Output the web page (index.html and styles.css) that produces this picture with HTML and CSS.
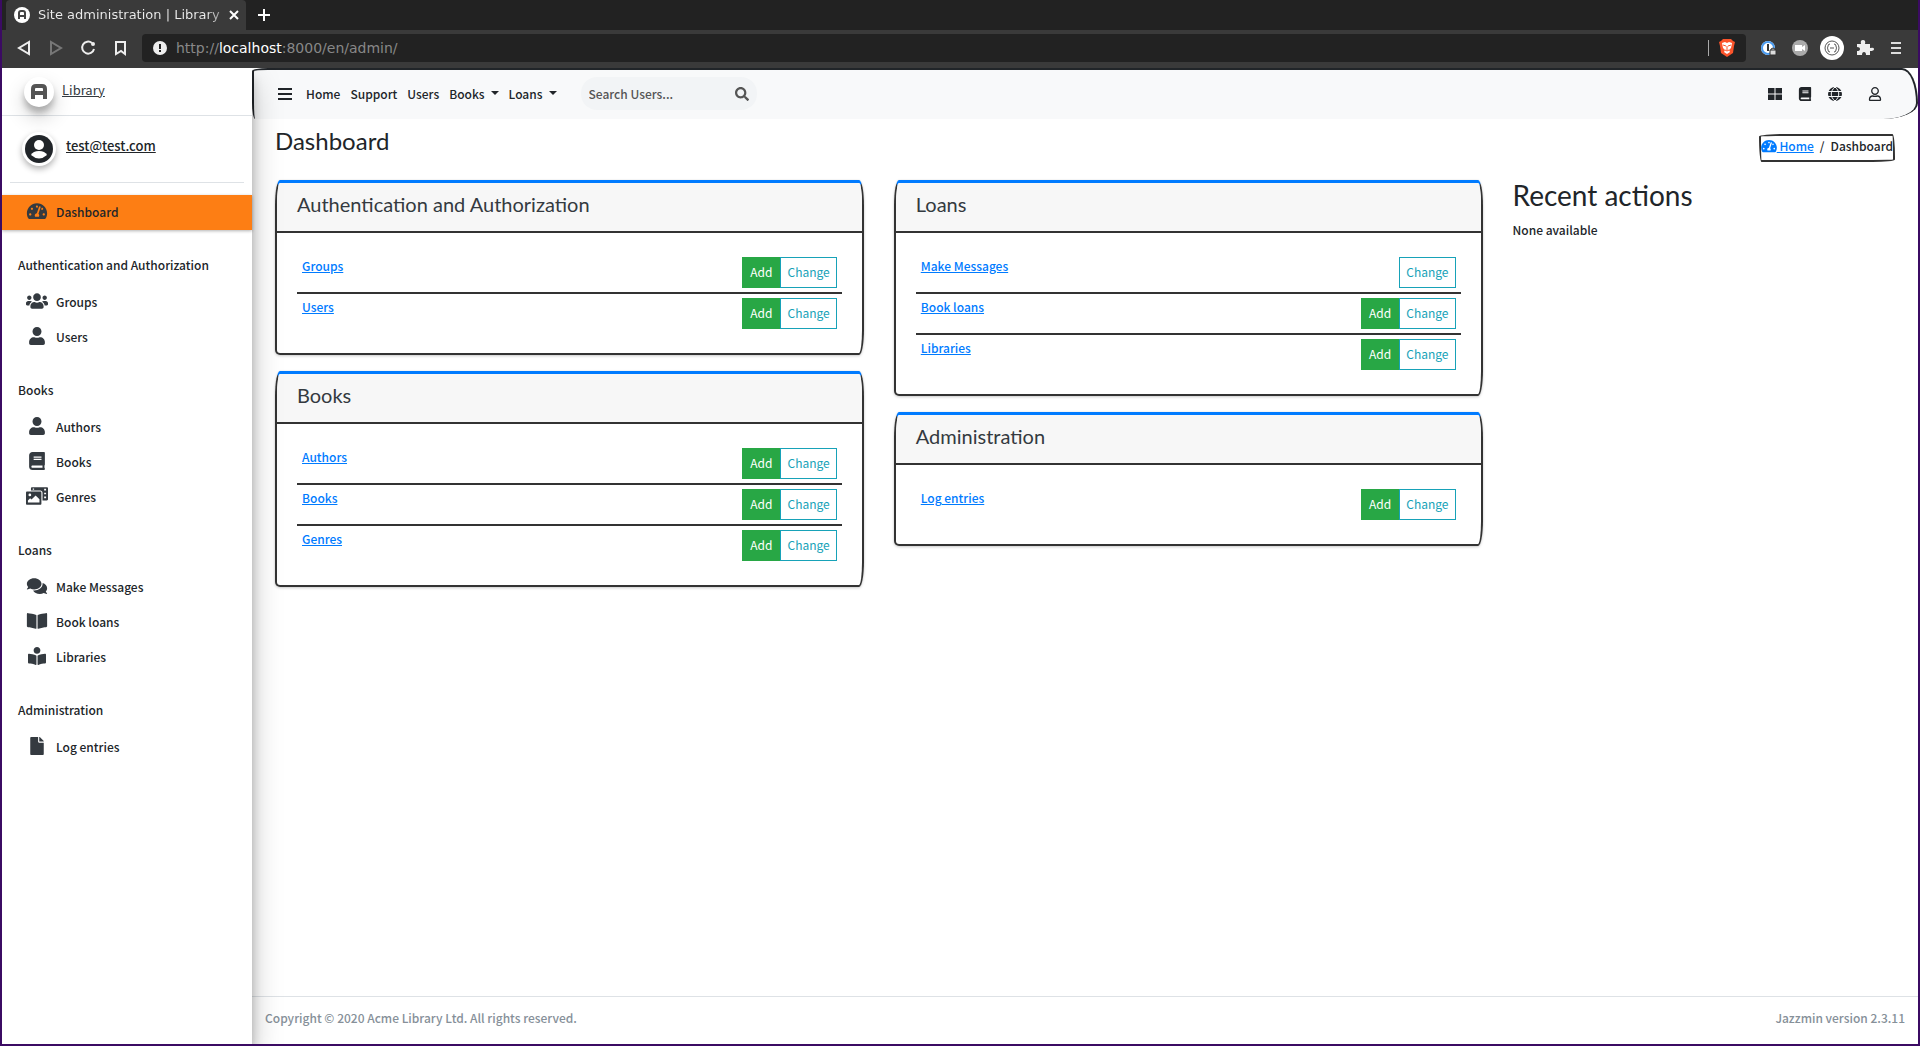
FILE: index.html
```
<!DOCTYPE html>
<html lang="en">
<head>
    <meta charset="UTF-8">
    <meta name="viewport" content="width=device-width, initial-scale=1.0">
    <title>Site administration | Library</title>
    <link rel="stylesheet" href="styles.css">
</head>
<body>

    <!-- Icon sprite -->
    <svg class="sprite" aria-hidden="true">
        <symbol id="user" viewBox="0 0 448 512"><path d="M224 256c70.7 0 128-57.3 128-128S294.7 0 224 0 96 57.3 96 128s57.3 128 128 128zm89.6 32h-16.7c-22.2 10.2-46.9 16-72.9 16s-50.6-5.8-72.9-16h-16.7C60.2 288 0 348.2 0 422.4V464c0 26.5 21.5 48 48 48h352c26.5 0 48-21.5 48-48v-41.6c0-74.2-60.2-134.4-134.4-134.4z"/></symbol>
        <symbol id="users" viewBox="0 0 640 512"><path d="M96 224c35.3 0 64-28.7 64-64s-28.7-64-64-64-64 28.7-64 64 28.7 64 64 64zm448 0c35.3 0 64-28.7 64-64s-28.7-64-64-64-64 28.7-64 64 28.7 64 64 64zm32 32h-64c-17.6 0-33.5 7.1-45.1 18.6 40.3 22.1 68.9 62 75.1 109.4h66c17.7 0 32-14.3 32-32v-32c0-35.3-28.7-64-64-64zm-256 0c61.9 0 112-50.1 112-112S381.9 32 320 32 208 82.1 208 144s50.1 112 112 112zm76.8 32h-8.3c-20.8 10-43.9 16-68.5 16s-47.6-6-68.5-16h-8.3C179.6 288 128 339.6 128 403.2V432c0 26.5 21.5 48 48 48h288c26.5 0 48-21.5 48-48v-28.8c0-63.6-51.6-115.2-115.2-115.2zm-223.7-13.4C161.5 263.1 145.6 256 128 256H64c-35.3 0-64 28.7-64 64v32c0 17.7 14.3 32 32 32h65.9c6.3-47.4 34.9-87.3 75.2-109.4z"/></symbol>
        <symbol id="book" viewBox="0 0 448 512"><path d="M448 360V24c0-13.3-10.7-24-24-24H96C43 0 0 43 0 96v320c0 53 43 96 96 96h328c13.3 0 24-10.7 24-24v-16c0-7.5-3.5-14.3-8.9-18.7-4.2-15.4-4.2-59.3 0-74.7 5.4-4.3 8.9-11.1 8.9-18.6zM128 134c0-3.3 2.7-6 6-6h212c3.3 0 6 2.7 6 6v20c0 3.3-2.7 6-6 6H134c-3.3 0-6-2.7-6-6v-20zm0 64c0-3.3 2.7-6 6-6h212c3.3 0 6 2.7 6 6v20c0 3.3-2.7 6-6 6H134c-3.3 0-6-2.7-6-6v-20zm253.4 250H96c-17.7 0-32-14.3-32-32 0-17.6 14.4-32 32-32h285.4c-1.9 17.1-1.9 46.9 0 64z"/></symbol>
        <symbol id="tachometer" viewBox="0 0 576 512"><path d="M288 32C128.94 32 0 160.94 0 320c0 52.8 14.25 102.26 39.06 144.8 5.61 9.62 16.3 15.2 27.44 15.2h443c11.14 0 21.83-5.58 27.44-15.2C561.75 422.26 576 372.8 576 320c0-159.06-128.94-288-288-288zm0 64c14.71 0 26.58 10.13 30.32 23.65-1.11 2.26-2.64 4.23-3.45 6.67l-9.22 27.67c-5.13 3.49-10.97 6.01-17.64 6.01-17.67 0-32-14.33-32-32S270.33 96 288 96zM96 384c-17.67 0-32-14.33-32-32s14.33-32 32-32 32 14.33 32 32-14.33 32-32 32zm48-160c-17.67 0-32-14.33-32-32s14.33-32 32-32 32 14.33 32 32-14.33 32-32 32zm246.77-72.41l-61.33 184C343.13 347.33 352 364.54 352 384c0 11.72-3.38 22.55-8.88 32H232.88c-5.5-9.45-8.88-20.28-8.88-32 0-33.94 26.5-61.43 59.9-63.59l61.34-184.01c4.17-12.56 17.73-19.45 30.36-15.17 12.57 4.19 19.35 17.79 15.17 30.36zm14.66 57.2l15.52-46.55c3.47-1.29 7.13-2.23 11.05-2.23 17.67 0 32 14.33 32 32s-14.33 32-32 32c-11.38-.01-20.89-6.28-26.57-15.22zM480 384c-17.67 0-32-14.33-32-32s14.33-32 32-32 32 14.33 32 32-14.33 32-32 32z"/></symbol>
        <symbol id="media" viewBox="0 0 640 512"><path fill-rule="evenodd" d="M176 0h432c18 0 32 14 32 32v320c0 18-14 32-32 32H480V160c0-35-29-64-64-64H144V32c0-18 14-32 32-32zm20 36v40h40V36zm332 12v48h56V48zm0 112v48h56v-48zm0 112v48h56v-48z"/><path fill-rule="evenodd" d="M32 128h384c18 0 32 14 32 32v320c0 18-14 32-32 32H32c-18 0-32-14-32-32V160c0-18 14-32 32-32zm80 56a40 40 0 1 0 0 80 40 40 0 1 0 0-80zM56 448h336v-96L280 240 160 360l-40-40-64 64z"/></symbol>
        <symbol id="comments" viewBox="0 0 576 512"><path d="M416 192c0-88.4-93.1-160-208-160S0 103.6 0 192c0 34.3 14.1 65.9 38 92-13.4 30.2-35.5 54.2-35.8 54.5-2.2 2.3-2.8 5.7-1.5 8.7S4.8 352 8 352c36.6 0 66.9-12.3 88.7-25 32.2 15.7 70.3 25 111.3 25 114.9 0 208-71.6 208-160zm122 220c23.9-26 38-57.7 38-92 0-66.9-53.5-124.2-129.3-148.1.9 6.6 1.3 13.3 1.3 20.1 0 105.9-107.7 192-240 192-10.8 0-21.3-.8-31.7-1.9C207.8 439.6 281.8 480 368 480c41 0 79.1-9.2 111.3-25 21.8 12.7 52.1 25 88.7 25 3.2 0 6.1-1.9 7.3-4.8 1.3-2.9.7-6.3-1.5-8.7-.3-.3-22.4-24.2-35.8-54.5z"/></symbol>
        <symbol id="book-open" viewBox="0 0 576 512"><path d="M542.22 32.05c-54.8 3.11-163.72 14.43-230.96 55.59-4.64 2.84-7.27 7.89-7.27 13.17v363.87c0 11.55 12.63 18.85 23.28 13.49 69.18-34.82 169.23-44.32 218.7-46.92 16.89-.89 30.02-14.43 30.02-30.66V62.75c.01-17.71-15.35-31.74-33.77-30.7zM264.73 87.64C197.5 46.48 88.58 35.17 33.78 32.05 15.36 31.01 0 45.04 0 62.75V400.6c0 16.24 13.13 29.78 30.02 30.66 49.49 2.6 149.59 12.11 218.77 46.95 10.62 5.35 23.21-1.94 23.21-13.46V100.63c0-5.29-2.62-10.14-7.27-12.99z"/></symbol>
        <symbol id="book-reader" viewBox="0 0 512 512"><path d="M352 96c0-53.02-42.98-96-96-96s-96 42.98-96 96 42.98 96 96 96 96-42.98 96-96zM233.59 241.1c-59.33-36.32-155.43-46.3-203.79-49.05C13.55 191.13 0 203.51 0 219.14v222.8c0 14.33 11.59 26.28 26.49 27.05 43.66 2.29 131.99 10.68 193.04 41.43 9.37 4.72 20.48-1.71 20.48-11.87V252.56c-.01-4.67-2.32-8.95-6.42-11.46zm248.61-49.05c-48.35 2.74-144.46 12.73-203.78 49.05-4.1 2.51-6.41 6.96-6.41 11.63v245.79c0 10.19 11.14 16.63 20.54 11.9 61.04-30.72 149.32-39.11 192.97-41.4 14.9-.78 26.49-12.73 26.49-27.06V219.14c-.01-15.63-13.56-28.01-29.81-27.09z"/></symbol>
        <symbol id="file" viewBox="0 0 384 512"><path d="M224 136V0H24C10.7 0 0 10.7 0 24v464c0 13.3 10.7 24 24 24h336c13.3 0 24-10.7 24-24V160H248c-13.2 0-24-10.8-24-24zm160-14.1v6.1H256V0h6.1c6.4 0 12.5 2.5 17 7l97.9 98c4.5 4.5 7 10.6 7 16.9z"/></symbol>
        <symbol id="search" viewBox="0 0 512 512"><path d="M505 442.7L405.3 343c-4.5-4.5-10.6-7-17-7H372c27.6-35.3 44-79.7 44-128C416 93.1 322.9 0 208 0S0 93.1 0 208s93.1 208 208 208c48.3 0 92.7-16.4 128-44v16.3c0 6.4 2.5 12.5 7 17l99.7 99.7c9.4 9.4 24.6 9.4 33.9 0l28.3-28.3c9.4-9.4 9.4-24.6.1-34zM208 336c-70.7 0-128-57.2-128-128 0-70.7 57.2-128 128-128 70.7 0 128 57.2 128 128 0 70.7-57.2 128-128 128z"/></symbol>
        <symbol id="user-outline" viewBox="0 0 448 512"><path d="M313.6 304c-28.7 0-42.5 16-89.6 16-47.1 0-60.8-16-89.6-16C60.2 304 0 364.2 0 438.4V464c0 26.5 21.5 48 48 48h352c26.5 0 48-21.5 48-48v-25.6c0-74.2-60.2-134.4-134.4-134.4zM400 464H48v-25.6c0-47.6 38.8-86.4 86.4-86.4 14.6 0 38.3 16 89.6 16 51.7 0 74.9-16 89.6-16 47.6 0 86.4 38.8 86.4 86.4V464zM224 288c79.5 0 144-64.5 144-144S303.5 0 224 0 80 64.5 80 144s64.5 144 144 144zm0-240c52.9 0 96 43.1 96 96s-43.1 96-96 96-96-43.1-96-96 43.1-96 96-96z"/></symbol>
        <symbol id="bars" viewBox="0 0 14 14"><path d="M0 1h14v2H0zM0 6h14v2H0zM0 11h14v2H0z"/></symbol>
        <symbol id="grid" viewBox="0 0 14 14"><path d="M0 1h6.500v5.500H0zM7.500 1H14v5.500H7.500zM0 7.500h6.500V13H0zM7.500 7.500H14V13H7.500z"/></symbol>
        <symbol id="globe" viewBox="0 0 14 14"><circle cx="7" cy="7" r="7"/><path d="M0 4.500h14M0 9.500h14M7 0c-5 4-5 10 0 14M7 0c5 4 5 10 0 14" fill="none" stroke="#f8f9fa"/></symbol>
        <symbol id="logo" viewBox="0 0 16 16"><path d="M2 15V5q0-3 3-3h6q3 0 3 3v10M2 9h12" fill="none" stroke="currentColor" stroke-width="4"/></symbol>
    </svg>

    <!-- Browser window -->
    <div class="browser">
        <div class="tabs">
            <div class="tab">
                <svg class="favicon" viewBox="0 0 16 16"><circle cx="8" cy="8" r="8" fill="#fff"/><path d="M5 12V6q0-2 2-2h2q2 0 2 2v6M5 9h6" fill="none" stroke="#444" stroke-width="2"/></svg>
                <span class="tab-title">Site administration | Library</span>
                <button class="tab-button" aria-label="Close tab"><svg viewBox="0 0 10 10"><path d="M1 1l8 8M9 1L1 9"/></svg></button>
            </div>
            <button class="tab-button tab-new" aria-label="New tab"><svg viewBox="0 0 12 12"><path d="M6 0v12M0 6h12"/></svg></button>
        </div>
        <div class="toolbar">
            <button class="tool" aria-label="Back"><svg viewBox="0 0 16 16"><path d="M13 2v12L3 8z"/></svg></button>
            <button class="tool tool-off" aria-label="Forward"><svg viewBox="0 0 16 16"><path d="M3 2v12l10-6z"/></svg></button>
            <button class="tool" aria-label="Reload"><svg viewBox="0 0 16 16"><path d="M14 9a6 6 0 1 1-2-6"/><circle cx="13" cy="4" r="1"/></svg></button>
            <button class="tool" aria-label="Bookmark"><svg viewBox="0 0 16 16"><path d="M4 2h9v12l-4-3-5 3z"/></svg></button>
            <div class="address">
                <svg class="warn" viewBox="0 0 14 14"><circle cx="7" cy="7" r="7" fill="#eee"/><path d="M7 3v5M7 9v2" stroke="#222" stroke-width="2"/></svg>
                <span class="url">http://<b>localhost</b>:8000/en/admin/</span>
                <span class="divider"></span>
                <svg class="brave" viewBox="0 0 16 18"><path d="M4 0h8l2 2 2 1-1 4-1 7-6 4-6-4-1-7-1-4 2-1z" fill="#fb542b"/><path d="M3 4l3-1 2 1 2-1 3 1-1 5-2 2 1 2-3 2-3-2 1-2-2-2z" fill="#fff"/><path d="M4 6l3 1M12 6L9 7M8 7v4M6 11l2 1 2-1" fill="none" stroke="#fb542b"/></svg>
            </div>
            <div class="extensions">
                <svg viewBox="0 0 24 24"><circle cx="12" cy="12" r="7" fill="#fff"/><circle cx="12" cy="12" r="6" fill="none" stroke="#4a9bf0" stroke-width="2"/><path d="M12 8v7" stroke="#333" stroke-width="2"/><path d="M14 19v-5h6v5h-6zM15 14v-1q2-2 4 0v1" fill="#ddd" stroke="#333"/></svg>
                <svg viewBox="0 0 24 24"><circle cx="12" cy="12" r="8" fill="#aaa"/><path d="M7 9h7v6H7zM14 11l3-2v6l-3-2z" fill="#fff"/></svg>
                <svg viewBox="0 0 24 24"><circle cx="12" cy="12" r="12" fill="#fff"/><circle cx="12" cy="12" r="7" fill="none" stroke="#555"/><path d="M10 8q-2 0-2 2t-1 2q1 0 1 2t2 2M14 8q2 0 2 2t1 2q-1 0-1 2t-2 2M10 12h4" fill="none" stroke="#555"/></svg>
                <svg viewBox="0 0 24 24"><path d="M5 8h4q-1-4 2-4t2 4h5v4q4-1 4 1t-4 2v4h-4q0-3-2-3t-2 3H5v-4q3 0 3-2t-3-2z" fill="#eee"/></svg>
                <svg viewBox="0 0 24 24"><path d="M7 7h10M7 12h10M7 17h10" stroke="#ddd" stroke-width="2"/></svg>
            </div>
        </div>

        <div class="wrapper">
            <!-- Main sidebar -->
            <aside class="sidebar">
                <a class="brand" href="#">
                    <span class="brand-logo"><svg><use href="#logo"/></svg></span>
                    <span class="brand-text">Library</span>
                </a>
                <div class="user-panel">
                    <span class="avatar"><svg viewBox="0 0 28 28"><circle cx="14" cy="14" r="14" fill="#212529"/><circle cx="14" cy="10" r="5" fill="#fff"/><path d="M6 20q2-4 8-4t8 4q-8 7-16 0z" fill="#fff"/></svg></span>
                    <a class="user-link" href="#">test@test.com</a>
                </div>
                <nav class="side-nav">
                    <a class="side-link active" href="#"><svg><use href="#tachometer"/></svg>Dashboard</a>
                    <h6>Authentication and Authorization</h6>
                    <a class="side-link" href="#"><svg><use href="#users"/></svg>Groups</a>
                    <a class="side-link" href="#"><svg><use href="#user"/></svg>Users</a>
                    <h6>Books</h6>
                    <a class="side-link" href="#"><svg><use href="#user"/></svg>Authors</a>
                    <a class="side-link" href="#"><svg><use href="#book"/></svg>Books</a>
                    <a class="side-link" href="#"><svg><use href="#media"/></svg>Genres</a>
                    <h6>Loans</h6>
                    <a class="side-link" href="#"><svg><use href="#comments"/></svg>Make Messages</a>
                    <a class="side-link" href="#"><svg><use href="#book-open"/></svg>Book loans</a>
                    <a class="side-link" href="#"><svg><use href="#book-reader"/></svg>Libraries</a>
                    <h6>Administration</h6>
                    <a class="side-link" href="#"><svg><use href="#file"/></svg>Log entries</a>
                </nav>
            </aside>

            <div class="main">
                <!-- Top navbar -->
                <nav class="navbar">
                    <button class="nav-icon nav-toggle" aria-label="Toggle sidebar"><svg><use href="#bars"/></svg></button>
                    <a class="nav-link" href="#">Home</a>
                    <a class="nav-link" href="#">Support</a>
                    <a class="nav-link" href="#">Users</a>
                    <a class="nav-link dropdown" href="#">Books</a>
                    <a class="nav-link dropdown" href="#">Loans</a>
                    <form class="search">
                        <input type="search" placeholder="Search Users..." aria-label="Search Users">
                        <button type="submit" aria-label="Search"><svg><use href="#search"/></svg></button>
                    </form>
                    <div class="nav-right">
                        <button class="nav-icon" aria-label="Apps"><svg><use href="#grid"/></svg></button>
                        <button class="nav-icon" aria-label="Docs"><svg><use href="#book"/></svg></button>
                        <button class="nav-icon" aria-label="Language"><svg><use href="#globe"/></svg></button>
                        <button class="nav-icon nav-user" aria-label="Account"><svg><use href="#user-outline"/></svg></button>
                    </div>
                </nav>

                <header class="content-header">
                    <h1>Dashboard</h1>
                    <div class="breadcrumb">
                        <a href="#"><svg><use href="#tachometer"/></svg> Home</a>
                        <span>/</span>
                        <span>Dashboard</span>
                    </div>
                </header>

                <div class="content">
                    <div class="column">
                        <section class="card">
                            <h5>Authentication and Authorization</h5>
                            <table>
                                <tr><td><a href="#">Groups</a></td><td><div class="actions"><button class="btn add">Add</button><button class="btn change">Change</button></div></td></tr>
                                <tr><td><a href="#">Users</a></td><td><div class="actions"><button class="btn add">Add</button><button class="btn change">Change</button></div></td></tr>
                            </table>
                        </section>
                        <section class="card">
                            <h5>Books</h5>
                            <table>
                                <tr><td><a href="#">Authors</a></td><td><div class="actions"><button class="btn add">Add</button><button class="btn change">Change</button></div></td></tr>
                                <tr><td><a href="#">Books</a></td><td><div class="actions"><button class="btn add">Add</button><button class="btn change">Change</button></div></td></tr>
                                <tr><td><a href="#">Genres</a></td><td><div class="actions"><button class="btn add">Add</button><button class="btn change">Change</button></div></td></tr>
                            </table>
                        </section>
                    </div>
                    <div class="column">
                        <section class="card">
                            <h5>Loans</h5>
                            <table>
                                <tr><td><a href="#">Make Messages</a></td><td><div class="actions"><button class="btn change">Change</button></div></td></tr>
                                <tr><td><a href="#">Book loans</a></td><td><div class="actions"><button class="btn add">Add</button><button class="btn change">Change</button></div></td></tr>
                                <tr><td><a href="#">Libraries</a></td><td><div class="actions"><button class="btn add">Add</button><button class="btn change">Change</button></div></td></tr>
                            </table>
                        </section>
                        <section class="card">
                            <h5>Administration</h5>
                            <table>
                                <tr><td><a href="#">Log entries</a></td><td><div class="actions"><button class="btn add">Add</button><button class="btn change">Change</button></div></td></tr>
                            </table>
                        </section>
                    </div>
                    <div class="column recent">
                        <h3>Recent actions</h3>
                        <p>None available</p>
                    </div>
                </div>

                <footer>
                    <span>Copyright © 2020 Acme Library Ltd. All rights reserved.</span>
                    <span>Jazzmin version 2.3.11</span>
                </footer>
            </div>
        </div>
    </div>

</body>
</html>
```
FILE: styles.css
```
* {
    box-sizing: border-box;
}

body {
    margin: 0;
    color: #212529;
    font-family: "Noto Sans CJK SC", "Liberation Sans", sans-serif;
    font-size: 12px;
    font-weight: 500;
    line-height: 24px;
}

button,
input {
    font: inherit;
    color: inherit;
    border: 0;
    padding: 0;
    background: none;
}

svg {
    display: block;
    fill: currentColor;
}

.sprite {
    display: none;
}

/* Browser window */
.browser {
    display: flex;
    flex-direction: column;
    min-height: 100vh;
    border: solid #3b0b63;
    border-width: 0 2px 2px;
    background: #fff;
}

.tabs {
    display: flex;
    align-items: center;
    height: 30px;
    padding-left: 4px;
    background: #222;
    color: #fff;
    font-family: "DejaVu Sans", sans-serif;
    font-size: 13px;
    font-weight: normal;
}

.tab {
    display: flex;
    align-items: center;
    width: 240px;
    height: 30px;
    padding: 0 7px 0 8px;
    border-radius: 4px 4px 0 0;
    background: #3a3a3a;
}

.favicon {
    width: 16px;
    height: 16px;
    margin-right: 8px;
}

.tab-title {
    flex: 1;
    overflow: hidden;
    white-space: nowrap;
    background: linear-gradient(90deg, #eee 88%, #666);
    background-clip: text;
    -webkit-background-clip: text;
    color: transparent;
}

.tab-button svg {
    width: 10px;
    height: 10px;
    stroke: #fff;
    stroke-width: 2;
}

.tab-new {
    margin-left: 12px;
}

.tab-new svg {
    width: 12px;
    height: 12px;
}

.toolbar {
    display: flex;
    align-items: center;
    height: 38px;
    padding: 0 10px 2px 14px;
    background: #3a3a3a;
    color: #eee;
}

.tool {
    width: 16px;
    margin-right: 16px;
}

.tool svg {
    width: 16px;
    height: 16px;
    fill: none;
    stroke: currentColor;
    stroke-width: 2;
}

.tool-off {
    color: #777;
}

.address {
    display: flex;
    flex: 1;
    align-items: center;
    height: 28px;
    margin-left: -2px;
    padding: 0 11px;
    border-radius: 4px;
    background: #222;
    color: #888;
    font-family: "DejaVu Sans", sans-serif;
    font-size: 14px;
    font-weight: normal;
}

.address b {
    color: #fff;
    font-weight: normal;
}

.warn {
    width: 14px;
    height: 14px;
}

.url {
    flex: 1;
    margin-left: 9px;
}

.divider {
    width: 1px;
    height: 16px;
    margin-right: 10px;
    background: #aaa;
}

.brave {
    width: 16px;
    height: 18px;
}

.extensions {
    display: flex;
    gap: 8px;
    margin-left: 10px;
}

.extensions svg {
    width: 24px;
    height: 24px;
}

/* Sidebar */
.wrapper {
    display: flex;
    flex: 1;
}

.sidebar {
    position: relative;
    z-index: 1;
    flex: none;
    width: 250px;
    background: #fff;
    box-shadow: 0 14px 28px rgba(0, 0, 0, .25), 0 10px 10px rgba(0, 0, 0, .22);
    clip-path: inset(0 -40px 0 0);
}

.brand {
    display: flex;
    height: 48px;
    padding: 9px 22px;
    border-bottom: 1px solid #dee2e6;
    color: #343a40;
    font-size: 13px;
    font-weight: normal;
    line-height: 26px;
}

.brand-logo,
.avatar {
    display: grid;
    place-items: center;
    width: 30px;
    height: 30px;
    border-radius: 50%;
    background: #fff;
    box-shadow: 0 10px 20px rgba(0, 0, 0, .19), 0 6px 6px rgba(0, 0, 0, .23);
}

.brand-logo {
    margin-right: 8px;
    color: #555;
}

.brand-logo svg {
    width: 16px;
    height: 16px;
}

.user-panel {
    display: flex;
    height: 67px;
    margin: 0 8px 12px;
    padding: 16px 12px;
    border-bottom: 1px solid #dee2e6;
}

.avatar {
    width: 34px;
    height: 34px;
    box-shadow: 0 3px 6px rgba(0, 0, 0, .3);
}

.avatar svg {
    width: 28px;
    height: 28px;
}

.user-link {
    margin-left: 10px;
    font-size: 13px;
    line-height: 28px;
    color: inherit;
}

.side-link {
    display: flex;
    align-items: center;
    height: 35px;
    padding: 0 0 2px 24px;
    color: #212529;
    text-decoration: none;
}

.side-link svg {
    width: 22px;
    height: 18px;
    margin-right: 8px;
    margin-bottom: 2px;
    color: #343a40;
}

.side-link.active {
    background: #fd7e14;
    box-shadow: 0 1px 3px rgba(0, 0, 0, .3);
}

.side-nav h6 {
    margin: 0;
    padding: 23px 16px 8px;
    font-size: 12px;
    font-weight: 500;
    line-height: 24px;
}

/* Navbar */
.main {
    display: flex;
    flex: 1;
    flex-direction: column;
}

.navbar {
    display: flex;
    align-items: center;
    height: 51px;
    padding: 0 34px 2px 24px;
    border: 2px solid #212529;
    border-bottom: 0;
    border-radius: 25px 25px 55px 5px / 5px 55px 25px 25px;
    background: #f8f9fa;
}

.nav-icon svg {
    width: 14px;
    height: 14px;
}

.nav-toggle {
    margin-right: 4px;
}

.nav-link {
    margin-left: 10px;
    color: inherit;
    text-decoration: none;
}

.dropdown::after {
    content: "";
    display: inline-block;
    margin-left: 6px;
    vertical-align: 4px;
    border: 4px solid transparent;
    border-top-color: currentColor;
    border-bottom: 0;
}

.search {
    display: flex;
    align-items: center;
    width: 176px;
    height: 33px;
    margin-left: 24px;
    padding: 0 8px;
    border-radius: 16px;
    background: #f2f4f6;
    color: #555;
}

.search input {
    flex: 1;
    min-width: 0;
}

.search input::placeholder {
    color: #555;
    opacity: 1;
}

.search svg {
    width: 14px;
    height: 14px;
}

.nav-right {
    display: flex;
    align-items: center;
    gap: 16px;
    margin-left: auto;
}

.nav-user {
    margin-left: 10px;
}

/* Content */
h1,
h3,
h5 {
    margin: 0;
    font-family: Lato, sans-serif;
    font-weight: normal;
}

.content-header {
    display: flex;
    justify-content: space-between;
    padding: 6px 23px 18px;
}

h1 {
    font-size: 24px;
    line-height: 32px;
}

.breadcrumb {
    display: flex;
    gap: 6px;
    height: 28px;
    margin-top: 9px;
    border: 2px solid #333;
    border-radius: 255px 25px 225px 25px / 25px 225px 25px 255px;
    line-height: 20px;
}

.breadcrumb svg {
    display: inline-block;
    width: 16px;
    height: 14px;
    vertical-align: -2px;
}

.breadcrumb a,
.card a {
    color: #007bff;
}

.content {
    display: grid;
    grid-template-columns: 3fr 3fr 2fr;
    padding: 0 8px;
}

.column {
    padding: 0 15px;
}

.card {
    margin-bottom: 16px;
    border: 2px solid #333;
    border-top: 3px solid #007bff;
    border-radius: 5px 5px 5px 5px / 25px 25px 25px 5px;
    box-shadow: 0 0 1px rgba(0, 0, 0, .13), 0 1px 3px rgba(0, 0, 0, .2);
    overflow: hidden;
}

.card h5 {
    padding: 7px 20px 13px;
    border-bottom: 2px solid #333;
    background: #f7f7f7;
    color: #343a40;
    font-size: 20px;
    line-height: 28px;
}

.card table {
    width: calc(100% - 40px);
    margin: 20px;
    border-spacing: 0;
}

.card td {
    padding: 4px 5px;
    vertical-align: top;
    line-height: 18px;
}

.card tr + tr td {
    border-top: 2px solid #333;
}

.actions {
    display: flex;
    justify-content: flex-end;
}

.btn {
    height: 31px;
    padding: 0 6px 2px;
    border: 1px solid #17a2b8;
    color: #17a2b8;
    font-weight: normal;
}

.btn.add {
    padding: 0 7px 2px;
    border-color: #28a745;
    background: #28a745;
    color: #fff;
}

.recent h3 {
    font-size: 28px;
    line-height: 30px;
}

.recent p {
    margin: 8px 0;
}

footer {
    display: flex;
    justify-content: space-between;
    margin-top: auto;
    padding: 9px 13px 14px;
    border-top: 1px solid #dee2e6;
    color: #869099;
}
```
